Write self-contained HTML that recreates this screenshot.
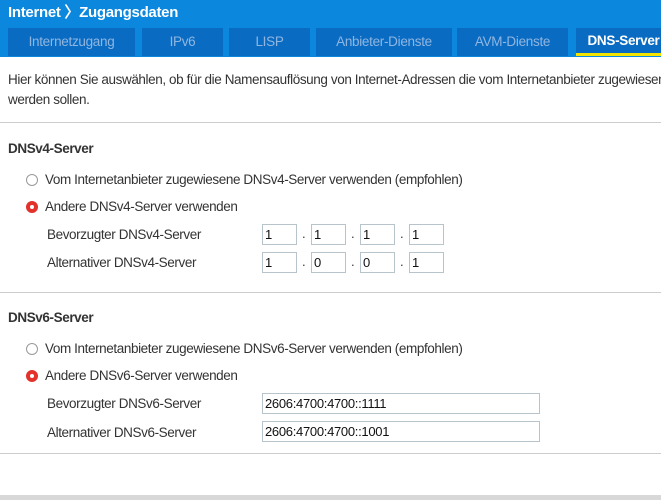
<!DOCTYPE html>
<html><head><meta charset="utf-8"><style>
*{margin:0;padding:0;box-sizing:border-box}
body{width:661px;height:500px;overflow:hidden;background:#fff;font-family:"Liberation Sans",sans-serif;color:#333;position:relative;font-size:13.5px}
.hdr{position:absolute;left:0;top:0;width:661px;height:57px;background:#0b87de}
.title{position:absolute;left:8px;top:1px;color:#fff;font-weight:bold;font-size:15px;letter-spacing:-0.3px}
.tab{position:absolute;top:28px;height:28px;background:#0a6bc3;color:#8fb6e0;font-size:13.5px;text-align:center;line-height:27px;letter-spacing:-0.3px}
.tab.act{color:#fff;font-weight:bold;border-bottom:3px solid #f4e400;line-height:26px}
.t{position:absolute;white-space:nowrap;letter-spacing:-0.4px}
.b{font-weight:bold}
.hr{position:absolute;left:0;width:661px;height:1px;background:#ccc}
.rad{position:absolute;width:12px;height:12px;border-radius:50%;border:1px solid #999;background:#fff}
.rad.on{background:#e2322b;border-color:#e2322b}
.rad.on::after{content:"";position:absolute;left:3px;top:3px;width:4px;height:4px;border-radius:50%;background:#fff}
.in{position:absolute;height:21px;border:1px solid #b8c4cc;background:#fff;font-size:13px;line-height:19px;padding-left:2px;color:#111;letter-spacing:-0.3px}
.dot{position:absolute;font-size:13px}
</style></head><body>
<div class="hdr"></div>
<div class="title">Internet 〉Zugangsdaten</div>
<div class="tab" style="left:8px;width:127px">Internetzugang</div>
<div class="tab" style="left:142px;width:81px">IPv6</div>
<div class="tab" style="left:229px;width:81px">LISP</div>
<div class="tab" style="left:316px;width:136px">Anbieter-Dienste</div>
<div class="tab" style="left:457px;width:111px">AVM-Dienste</div>
<div class="tab act" style="left:576px;width:95px">DNS-Server</div>

<div class="t" style="left:8px;top:72px">Hier können Sie auswählen, ob für die Namensauflösung von Internet-Adressen die vom Internetanbieter zugewiesenen</div>
<div class="t" style="left:8px;top:92px">werden sollen.</div>
<div class="hr" style="top:122px"></div>

<div class="t b" style="left:8px;top:141px">DNSv4-Server</div>
<div class="rad" style="left:26px;top:174px"></div>
<div class="t" style="left:45px;top:172px">Vom Internetanbieter zugewiesene DNSv4-Server verwenden (empfohlen)</div>
<div class="rad on" style="left:26px;top:201px"></div>
<div class="t" style="left:45px;top:199px">Andere DNSv4-Server verwenden</div>
<div class="t" style="left:47px;top:227px">Bevorzugter DNSv4-Server</div>
<div class="t" style="left:47px;top:255px">Alternativer DNSv4-Server</div>
<div class="in" style="left:262px;top:224px;width:35px">1</div>
<div class="dot" style="left:302px;top:226px">.</div>
<div class="in" style="left:311px;top:224px;width:35px">1</div>
<div class="dot" style="left:351px;top:226px">.</div>
<div class="in" style="left:360px;top:224px;width:35px">1</div>
<div class="dot" style="left:400px;top:226px">.</div>
<div class="in" style="left:409px;top:224px;width:35px">1</div>
<div class="in" style="left:262px;top:252px;width:35px">1</div>
<div class="dot" style="left:302px;top:254px">.</div>
<div class="in" style="left:311px;top:252px;width:35px">0</div>
<div class="dot" style="left:351px;top:254px">.</div>
<div class="in" style="left:360px;top:252px;width:35px">0</div>
<div class="dot" style="left:400px;top:254px">.</div>
<div class="in" style="left:409px;top:252px;width:35px">1</div>
<div class="hr" style="top:292px"></div>

<div class="t b" style="left:8px;top:310px">DNSv6-Server</div>
<div class="rad" style="left:26px;top:343px"></div>
<div class="t" style="left:45px;top:341px">Vom Internetanbieter zugewiesene DNSv6-Server verwenden (empfohlen)</div>
<div class="rad on" style="left:26px;top:370px"></div>
<div class="t" style="left:45px;top:368px">Andere DNSv6-Server verwenden</div>
<div class="t" style="left:47px;top:396px">Bevorzugter DNSv6-Server</div>
<div class="t" style="left:47px;top:425px">Alternativer DNSv6-Server</div>
<div class="in" style="left:262px;top:393px;width:278px">2606:4700:4700::1111</div>
<div class="in" style="left:262px;top:421px;width:278px">2606:4700:4700::1001</div>
<div class="hr" style="top:453px"></div>
<div style="position:absolute;left:0;top:495px;width:661px;height:5px;background:#d8d8d8"></div>
</body></html>
